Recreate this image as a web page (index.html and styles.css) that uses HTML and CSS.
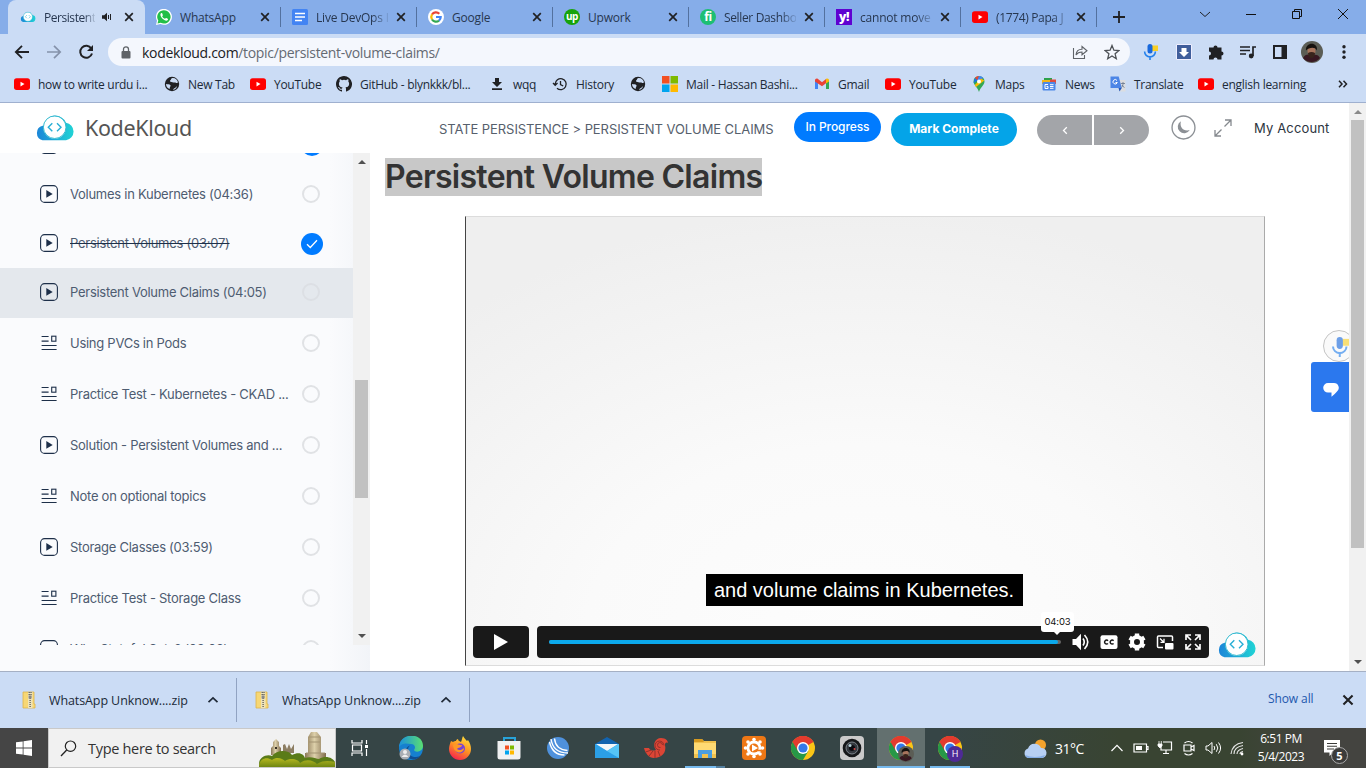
FILE: index.html
```html
<!DOCTYPE html>
<html lang="en">
<head>
<meta charset="utf-8">
<title>Persistent Volume Claims</title>
<link rel="stylesheet" href="styles.css">
</head>
<body>
<svg class="defs" width="0" height="0">
  <defs>
    <linearGradient id="cloudg" x1="0" x2="1"><stop offset="0" stop-color="#1c86d8"/><stop offset="1" stop-color="#20d3d5"/></linearGradient>
    <linearGradient id="ffg" x1=".8" y1="0" x2=".3" y2="1"><stop offset="0" stop-color="#ffe33e"/><stop offset=".5" stop-color="#ff9422"/><stop offset="1" stop-color="#f5214f"/></linearGradient>
    <linearGradient id="edgeg" x1="0" y1="0" x2="1" y2="0"><stop offset="0" stop-color="#1a8fdc"/><stop offset="1" stop-color="#5adf72"/></linearGradient>
    <linearGradient id="stone" x1="0" x2="1"><stop offset="0" stop-color="#8b7857"/><stop offset=".45" stop-color="#ddd0aa"/><stop offset="1" stop-color="#806c4d"/></linearGradient>
    <linearGradient id="bush" x1="0" y1="0" x2="0" y2="1"><stop offset="0" stop-color="#b7b91f"/><stop offset="1" stop-color="#6f8612"/></linearGradient>
    <symbol id="cloud" viewBox="0 0 40 26"><path d="M7.500 25.300A7.500 7.500 0 0 1 7.500 10.800H9A11.500 11.500 0 0 1 31 7.700 8.900 8.900 0 0 1 31 25.300z" fill="url(#cloudg)"/><circle cx="19.700" cy="12.500" r="11.300" fill="#fff"/><circle cx="19.700" cy="12.200" r="11.300" fill="none" stroke="#36bcd0" stroke-width="1"/><path d="M17.300 8.300 13.300 12.300l4 4M22 8.300l4 4-4 4" fill="none" stroke="#27aed5" stroke-width="1.400"/></symbol>
    <symbol id="x" viewBox="0 0 10 10"><path d="M1.200 1.200l7.600 7.600M8.800 1.200 1.200 8.800" fill="none" stroke="currentColor" stroke-width="1.700"/></symbol>
    <symbol id="yt" viewBox="0 0 16 16"><rect y="2.300" width="16" height="11.600" rx="2.600" fill="#f00"/><path d="M6.500 5.700v4.800l4-2.400z" fill="#fff"/></symbol>
    <symbol id="globe" viewBox="0 0 16 16"><circle cx="8" cy="8" r="7.200" fill="#202124"/><path d="M8.500 2c-2 .4-1 2-2.500 2.500C5.500 6 7 6 8.500 6.300c1.700.7 3-.3 3.500.8.800 0 1.600-.4 2-.9C13.300 3.500 11.300 1.800 8.500 2zM2 8c1.500.3 3.500 0 4.500 1.300.5 1.200-1 1.700-.8 3.700C3.500 12.300 2 10.500 2 8zM9 13.800c.5-1.400 1.500-1.800 2.600-2.400L13 10c-.5 2.500-2 3.700-4 3.800z" fill="#cbdcf5"/></symbol>
    <symbol id="play" viewBox="0 0 18 18"><rect x=".6" y=".6" width="16.800" height="16.800" rx="4" fill="none" stroke="#1d2f49" stroke-width="1.100"/><path d="M6.300 5v7.800l6.400-3.900z" fill="#1d2f49"/></symbol>
    <symbol id="doc" viewBox="0 0 18 18"><path d="M1.600 2.500h7M1.600 7.200h7M1.600 11.500h15M1.600 15.500h15" stroke="#1d2f49" stroke-width="1.200"/><rect x="11.700" y="2.200" width="4.200" height="5" fill="none" stroke="#1d2f49" stroke-width="1.100"/></symbol>
    <symbol id="zip" viewBox="0 0 14 18"><path d="M1 1h11v12h1v4H1z" fill="#f7d774" stroke="#ddb24a" stroke-width=".8"/><path d="M6 1h4.500v16H6z" fill="#eee3b8"/><path d="M7.200 1v4M9 1v4M8.100 7v10" stroke="#575757" stroke-width="1.300" stroke-dasharray="1 1"/><rect x="6.600" y="4.500" width="3" height="3" fill="#888"/></symbol>
    <symbol id="up" viewBox="0 0 12 12"><path d="M1.500 8.200 6 3.900l4.500 4.300" fill="none" stroke="currentColor" stroke-width="1.700"/></symbol>
    <symbol id="chrome" viewBox="0 0 24 24"><circle cx="12" cy="12" r="12" fill="#fbc516"/><path d="M12 12 1.600 6A12 12 0 0 1 22.400 6z" fill="#e33b2e"/><path d="M1.600 6A12 12 0 0 0 12 24l5.300-9L12 12z" fill="#279847"/><path d="M12 6h10.400A12 12 0 0 0 1.600 6L7 15z" fill="#e33b2e"/><circle cx="12" cy="12" r="6" fill="#fff"/><circle cx="12" cy="12" r="4.600" fill="#3478e8"/></symbol>
    <symbol id="face" viewBox="0 0 22 22"><circle cx="11" cy="11" r="11" fill="#5b5d55"/><path d="M2 17c2-4 5-4 9-3 4-1 7 0 8 3a11 11 0 0 1-17 0z" fill="#381822"/><ellipse cx="10.500" cy="10" rx="4" ry="5.500" fill="#a7745c"/><path d="M5 9.500c-1-8.500 12-9.500 11 0-2-4-8-3-11 0z" fill="#16120f"/><path d="M7 12q3.500-2 7 0 0 5-3.500 5T7 12z" fill="#38241c"/></symbol>
    <symbol id="mic" viewBox="0 0 16 16"><rect x="9" y="1.500" width="6" height="5.500" fill="#f8cf27"/><rect x="4.500" y="0" width="5" height="9.500" rx="2.500" fill="#1768dd"/><path d="M1.600 7.500a5.400 5.400 0 0 0 10.800 0M7 13v3" fill="none" stroke="#2481ec" stroke-width="1.600"/></symbol>
  </defs>
</svg>

<header class="tabs">
  <div class="tab tab-on"><svg class="i16"><use href="#cloud"/></svg><span class="tt fade short">Persistent</span><svg class="snd" viewBox="0 0 10 10"><path d="M0 3.300h2.200L5 .8v8.400L2.200 6.700H0z" fill="#202124"/><path d="M6.500 3v4M8.500 2v6" stroke="#202124"/></svg><svg class="cx"><use href="#x"/></svg></div>
  <div class="tab"><svg class="i16" viewBox="0 0 16 16"><path d="M0 16l1-4.200A8 8 0 1 1 4.400 15z" fill="#fff"/><path d="M1.500 14.600l.8-3A6.700 6.700 0 1 1 4.700 13.800z" fill="#22bf48"/><path d="M5.300 4c-1.700 1-.6 3.700 1 5.400 1.800 1.800 4.400 3.200 5.500 1.500.6-1 0-1.200-1.500-1.900-.8-.3-.8.7-1.400.7-1.200-.3-2.500-1.700-2.700-2.500.2-.5.8-.7.6-1.300C6.400 4.700 6.300 3.600 5.300 4z" fill="#fff"/></svg><span class="tt">WhatsApp</span><svg class="cx"><use href="#x"/></svg></div>
  <div class="tab"><svg class="i16" viewBox="0 0 16 16"><rect width="16" height="16" rx="1.500" fill="#4384f3"/><path d="M3 4.500h10M3 8h10M3 11.500h7" stroke="#fff" stroke-width="1.600"/></svg><span class="tt fade">Live DevOps I</span><svg class="cx"><use href="#x"/></svg></div>
  <div class="tab"><svg class="i16" viewBox="0 0 16 16"><circle cx="8" cy="8" r="8" fill="#fff"/><g fill="none" stroke-width="2.200"><path d="M4 5.500A4.700 4.700 0 0 1 11.300 4.700" stroke="#ea4335"/><path d="M4 10.500A5 5 0 0 1 4 5.400" stroke="#fbbc05"/><path d="M4 10.500A4.700 4.700 0 0 0 11 11.600" stroke="#34a853"/><path d="M8 8h4.700a4.700 4.700 0 0 1-1.700 3.600" stroke="#4285f4"/></g></svg><span class="tt">Google</span><svg class="cx"><use href="#x"/></svg></div>
  <div class="tab"><span class="fav upw">up</span><span class="tt">Upwork</span><svg class="cx"><use href="#x"/></svg></div>
  <div class="tab"><span class="fav fiv">fi</span><span class="tt fade tight">Seller Dashbo</span><svg class="cx"><use href="#x"/></svg></div>
  <div class="tab"><span class="fav yah">y!</span><span class="tt fade">cannot move</span><svg class="cx"><use href="#x"/></svg></div>
  <div class="tab"><svg class="i16"><use href="#yt"/></svg><span class="tt fade tight">(1774) Papa J</span><svg class="cx"><use href="#x"/></svg></div>
  <svg class="plus" viewBox="0 0 12 12"><path d="M6 0v12M0 6h12" stroke="#202124" stroke-width="1.800"/></svg>
  <div class="win">
    <svg viewBox="0 0 12 12"><path d="M1 4l5 4.500L11 4" fill="none" stroke="#202124"/></svg>
    <svg viewBox="0 0 12 12"><path d="M1 6.500h10" stroke="#111"/></svg>
    <svg viewBox="0 0 12 12"><path d="M1.500 3.500h7v7h-7zM3.500 3.500v-2h7v7h-2" fill="none" stroke="#111"/></svg>
    <svg viewBox="0 0 12 12"><path d="M1 1l10 10M11 1 1 11" stroke="#111"/></svg>
  </div>
</header>

<div class="toolbar">
  <svg class="nav" viewBox="0 0 16 16"><path d="M15 8H2M8 1.800 1.800 8 8 14.200" fill="none" stroke="#202124" stroke-width="1.800"/></svg>
  <svg class="nav" viewBox="0 0 16 16"><path d="M1 8h13M8 1.800 14.200 8 8 14.200" fill="none" stroke="#8592aa" stroke-width="1.700"/></svg>
  <svg class="nav" viewBox="0 0 16 16"><path d="M13.300 4.500A6 6 0 1 0 14 9.500" fill="none" stroke="#202124" stroke-width="2"/><path d="M15 1v6H9z" fill="#202124"/></svg>
  <div class="url">
    <svg class="lock" viewBox="0 0 10 13"><rect x=".5" y="5" width="9" height="7.500" rx="1" fill="#5f6368"/><path d="M2.500 5V3.300a2.500 2.500 0 0 1 5 0V5" fill="none" stroke="#5f6368" stroke-width="1.300"/></svg>
    <span class="addr"><b>kodekloud.com</b>/topic/persistent-volume-claims/</span>
    <svg class="i16" viewBox="0 0 16 16"><path d="M1.500 4v10.500h11V11M4 11c.3-4 2.800-5.700 6-5.700V2.500l5 4.300-5 4V8C7.500 8 5.500 8.700 4 11z" fill="none" stroke="#5f6368" stroke-width="1.100"/></svg>
    <svg class="i16 star" viewBox="0 0 16 16"><path d="M8 1.500l1.900 4.700 5 .4-3.800 3.200 1.200 4.900L8 12l-4.300 2.700 1.200-4.900L1.100 6.600l5-.4z" fill="none" stroke="#4d5156" stroke-width="1.300"/></svg>
  </div>
  <div class="ext">
    <svg viewBox="0 0 16 16"><use href="#mic"/></svg>
    <svg viewBox="0 0 16 16"><path d="M.5.500h15v15H.500z" fill="#405e9b" stroke="#eef"/><path d="M5.500 4h5v4H13l-5 5-5-5h2.500z" fill="#fff"/></svg>
    <svg viewBox="0 0 16 16"><path d="M1 3.500h4.500a2 2 0 1 1 4 0H13.500v4a2 2 0 1 1 0 4V15.500H9.500a2 2 0 0 0-4 0H1v-4a2 2 0 0 0 0-4z" fill="#202124"/></svg>
    <svg viewBox="0 0 16 16"><path d="M0 3h10M0 6.500h10M0 10h6M13 12V3h3" fill="none" stroke="#202124" stroke-width="1.700"/><circle cx="11.200" cy="12" r="2.400" fill="#202124"/></svg>
    <svg viewBox="0 0 16 16"><path d="M2 2h12v12H2z" fill="none" stroke="#202124" stroke-width="2"/><path d="M9.500 2H14v12H9.500z" fill="#202124"/></svg>
    <svg class="av"><use href="#face"/></svg>
    <svg viewBox="0 0 16 16"><g fill="#202124"><circle cx="8" cy="2.700" r="1.700"/><circle cx="8" cy="8" r="1.700"/><circle cx="8" cy="13.300" r="1.700"/></g></svg>
  </div>
</div>

<nav class="marks">
  <span><svg class="i16"><use href="#yt"/></svg><em class="m1">how to write urdu i...</em></span>
  <span><svg class="i16"><use href="#globe"/></svg><em>New Tab</em></span>
  <span><svg class="i16"><use href="#yt"/></svg><em>YouTube</em></span>
  <span><svg class="i16" viewBox="0 0 16 16"><path d="M8 0C3.580 0 0 3.580 0 8c0 3.540 2.290 6.530 5.470 7.590.4.070.55-.17.55-.38 0-.19-.01-.82-.01-1.490-2.010.37-2.530-.49-2.690-.94-.09-.23-.48-.94-.82-1.130-.28-.15-.68-.52-.01-.53.63-.01 1.080.58 1.230.82.72 1.210 1.870.87 2.330.66.070-.52.280-.87.510-1.070-1.780-.2-3.640-.89-3.640-3.950 0-.87.310-1.590.82-2.150-.08-.2-.36-1.020.08-2.120 0 0 .67-.21 2.200.82a7.600 7.600 0 0 1 4 0c1.530-1.040 2.200-.82 2.200-.82.440 1.100.16 1.920.08 2.120.51.56.82 1.270.82 2.150 0 3.070-1.870 3.750-3.650 3.950.29.25.54.73.54 1.480 0 1.070-.01 1.930-.01 2.200 0 .21.150.46.55.38A8 8 0 0 0 8 0z" fill="#202124"/></svg><em>GitHub - blynkkk/bl...</em></span>
  <span><svg class="i16" viewBox="0 0 16 16"><path d="M6 2h4v4h3l-5 5-5-5h3zM3 12.300h10V14H3z" fill="#202124"/></svg><em>wqq</em></span>
  <span><svg class="i16" viewBox="0 0 16 16"><path d="M3.200 8A5.500 5.500 0 1 1 5 12.200M8.500 5v3.500l2.700 1.500M1 7l2.200 2.300L5.500 7" fill="none" stroke="#202124" stroke-width="1.300"/></svg><em>History</em></span>
  <span><svg class="i16"><use href="#globe"/></svg></span>
  <span><svg class="i16" viewBox="0 0 16 16"><path d="M0 0h7.500v7.500H0z" fill="#f25022"/><path d="M8.500 0H16v7.500H8.500z" fill="#7fba00"/><path d="M0 8.500h7.500V16H0z" fill="#00a4ef"/><path d="M8.500 8.500H16V16H8.500z" fill="#ffb900"/></svg><em>Mail - Hassan Bashi...</em></span>
  <span><svg class="i16" viewBox="0 0 16 16"><path d="M1 3.500V13h3V7z" fill="#4285f4"/><path d="M15 3.500V13h-3V7z" fill="#34a853"/><path d="M1 4.500C1 3 2.500 2 4 3l4 3.200L12 3v4.200L8 10.200 1 5.500z" fill="#ea4335"/><path d="M12 3c1.500-1 3 0 3 1.500v1L12 7.500z" fill="#fbbc04"/></svg><em>Gmail</em></span>
  <span><svg class="i16"><use href="#yt"/></svg><em>YouTube</em></span>
  <span><svg class="i16" viewBox="0 0 16 16"><path d="M8 0a5.500 5.500 0 0 1 5.500 5.500C13.500 9 9.500 11 8 16 6.500 11 2.500 9 2.500 5.500A5.500 5.500 0 0 1 8 0z" fill="#34a853"/><path d="M8 0a5.500 5.500 0 0 0-4.200 2L6.500 4.500z" fill="#ea4335"/><path d="M8 0l-2 5 4-1 2.200-2.200A5.500 5.500 0 0 0 8 0z" fill="#4285f4"/><path d="M3.800 9 10 2.500l3.300 2L5 11z" fill="#fbbc04"/><path d="M3.800 2 2.600 7l4-2.500z" fill="#1a73e8"/><circle cx="8" cy="5.500" r="2" fill="#fff"/></svg><em>Maps</em></span>
  <span><svg class="i16" viewBox="0 0 16 16"><path d="M3 2h8v4H3z" fill="#2da14a"/><path d="M1 4h9v4H1z" fill="#f2b51b"/><path d="M9 3.500h6V8H9z" fill="#df4b3e"/><rect x="1.500" y="6" width="13" height="8.500" rx="1" fill="#4d87e8"/><path d="M7 8.500H4v4h3v-2H5.500M9 8.700h3.500M9 10.500h3.500M9 12.300h3.500" fill="none" stroke="#fff"/></svg><em>News</em></span>
  <span><svg class="i16" viewBox="0 0 16 16"><path d="M6 4h9.500v11.500H9z" fill="#dcdde0"/><path d="M.5.500h8.200L11.800 12H.5z" fill="#4c85e6"/><path d="M8.500 12h3.300L9.500 15.500z" fill="#2459be"/><path d="M7 4.500a2.200 2.200 0 1 0 .3 2H5.500" fill="none" stroke="#fff"/><path d="M10.800 7.500H15M13 6v1.500c0 2-.5 3-1.500 4M12 9c.5 1.200 1.500 2 2.500 2.500" fill="none" stroke="#66758b" stroke-width=".8"/></svg><em>Translate</em></span>
  <span><svg class="i16"><use href="#yt"/></svg><em>english learning</em></span>
  <span><svg viewBox="0 0 10 8" width="10" height="8"><path d="M1 .8 4 4 1 7.200M5.500.8 8.500 4l-3 3.200" fill="none" stroke="#202124" stroke-width="1.500"/></svg></span>
</nav>

<main class="page">
  <div class="site">
    <div class="top">
      <svg class="logo"><use href="#cloud"/></svg>
      <span class="brand">KodeKloud</span>
      <span class="crumb">STATE PERSISTENCE &gt; PERSISTENT VOLUME CLAIMS</span>
      <span class="prog">In Progress</span>
      <span class="mark">Mark Complete</span>
      <span class="pn"><i><svg viewBox="0 0 6 8"><path d="M4.800.8 1.500 4l3.300 3.200" fill="none" stroke="#fff" stroke-width="1.300"/></svg></i><i><svg viewBox="0 0 6 8"><path d="M1.200.8 4.500 4 1.200 7.200" fill="none" stroke="#fff" stroke-width="1.300"/></svg></i></span>
      <svg class="moon" viewBox="0 0 24 24"><circle cx="12" cy="12" r="11" fill="none" stroke="#8c9095" stroke-width="1.300"/><path d="M9.500 6C8 12 12 16 18 14.500A6.200 6.200 0 1 1 9.500 6z" fill="#8c9095"/></svg>
      <svg class="grow" viewBox="0 0 18 18"><path d="M11 1h6v6M17 1l-6.500 6.500M7 17H1v-6M1 17l6.500-6.500" fill="none" stroke="#85898e" stroke-width="1.300"/></svg>
      <span class="acct">My Account</span>
    </div>
    <div class="body">
      <aside class="side">
        <div class="scroll">
          <div class="list">
            <div class="row cut"><svg><use href="#play"/></svg><span></span><i class="done"></i></div>
            <div class="row r50 first"><svg><use href="#play"/></svg><span>Volumes in Kubernetes (04:36)</span><i></i></div>
            <div class="row r49"><svg><use href="#play"/></svg><span class="strike">Persistent Volumes (03:07)</span><i class="done"><svg viewBox="0 0 12 10"><path d="M1 5.200 4.300 8.500 11 1.300" fill="none" stroke="#fff" stroke-width="1.300"/></svg></i></div>
            <div class="row r50 on"><svg><use href="#play"/></svg><span>Persistent Volume Claims (04:05)</span><i></i></div>
            <div class="row"><svg><use href="#doc"/></svg><span>Using PVCs in Pods</span><i></i></div>
            <div class="row"><svg><use href="#doc"/></svg><span>Practice Test - Kubernetes - CKAD ...</span><i></i></div>
            <div class="row"><svg><use href="#play"/></svg><span>Solution - Persistent Volumes and ...</span><i></i></div>
            <div class="row"><svg><use href="#doc"/></svg><span>Note on optional topics</span><i></i></div>
            <div class="row"><svg><use href="#play"/></svg><span>Storage Classes (03:59)</span><i></i></div>
            <div class="row"><svg><use href="#doc"/></svg><span>Practice Test - Storage Class</span><i></i></div>
            <div class="row"><svg><use href="#play"/></svg><span>Why Stateful Sets? (03:02)</span><i></i></div>
          </div>
          <div class="bar bar-side"><svg class="arr" viewBox="0 0 8 4"><path d="M0 4 4 0l4 4z" fill="#505050"/></svg><b></b><svg class="arr" viewBox="0 0 8 4"><path d="M0 0h8L4 4z" fill="#505050"/></svg></div>
        </div>
      </aside>
      <section class="lesson">
        <h1><span>Persistent Volume Claims</span></h1>
        <div class="video">
          <div class="cap">and volume claims in Kubernetes.</div>
          <div class="ctl">
            <div class="pbtn"><svg viewBox="0 0 14 16"><path d="M0 0v16l14-8z" fill="#fff"/></svg></div>
            <div class="pbar">
              <div class="track"><div class="fill"></div><span class="tip">04:03</span></div>
              <svg viewBox="0 0 20 20"><path d="M1.500 7H5l5-5.300v16.600L5 13H1.500z" fill="#fff"/><path d="M12 6.500q2.500 3.500 0 7M13.500 3q6.500 7 0 14" fill="none" stroke="#fff" stroke-width="1.600"/></svg>
              <svg viewBox="0 0 20 20"><rect x="1.500" y="3.300" width="17" height="13.600" rx="2" fill="#fff"/><path d="M9 8.700A2 2 0 1 0 9 11.500M14.600 8.700a2 2 0 1 0 0 2.800" fill="none" stroke="#1a1a1a" stroke-width="1.500"/></svg>
              <svg viewBox="0 0 20 20"><circle cx="10" cy="10" r="5" fill="none" stroke="#fff" stroke-width="4"/><path d="M10 1.500v3M10 15.500v3M2.600 5.700l2.600 1.500M14.800 12.800l2.600 1.500M17.400 5.700l-2.600 1.500M5.200 12.800l-2.600 1.500" stroke="#fff" stroke-width="4.400"/></svg>
              <svg viewBox="0 0 20 20"><path d="M8 15.500H3.500a1 1 0 0 1-1-1V5a1 1 0 0 1 1-1h13a1 1 0 0 1 1 1v4" fill="none" stroke="#fff" stroke-width="1.500"/><rect x="10" y="11" width="8.500" height="6.500" rx="1" fill="#fff"/><path d="M5 6.500l3.500 3.500M9 6.800v3.500H5.500" fill="none" stroke="#fff" stroke-width="1.300"/></svg>
              <svg viewBox="0 0 20 20"><path d="M3 8V3h5M12 3h5v5M17 12v5h-5M8 17H3v-5M3 3l5 5M17 3l-5 5M17 17l-5-5M3 17l5-5" fill="none" stroke="#fff" stroke-width="1.700"/></svg>
            </div>
            <svg class="logo"><use href="#cloud"/></svg>
          </div>
        </div>
      </section>
    </div>
    <div class="dictate"><svg viewBox="0 0 16 16"><use href="#mic"/></svg></div>
    <div class="chat"><svg viewBox="0 0 16 14"><path d="M5 0h6a4.800 4.800 0 0 1 3 8.500Q12 11 8.500 13.800V9.600H5A4.800 4.800 0 0 1 5 0z" fill="#fff"/></svg></div>
  </div>
  <div class="bar bar-main"><svg class="arr" viewBox="0 0 8 4"><path d="M0 4 4 0l4 4z" fill="#8a8a8a"/></svg><b></b><svg class="arr" viewBox="0 0 8 4"><path d="M0 0h8L4 4z" fill="#505050"/></svg></div>
</main>

<div class="dl">
  <div class="file"><svg class="z"><use href="#zip"/></svg><span>WhatsApp Unknow....zip</span><svg class="u"><use href="#up"/></svg></div>
  <div class="file"><svg class="z"><use href="#zip"/></svg><span>WhatsApp Unknow....zip</span><svg class="u"><use href="#up"/></svg></div>
  <span class="all">Show all</span>
  <svg class="cx"><use href="#x"/></svg>
</div>

<footer class="task">
  <div class="start"><svg viewBox="0 0 16 16"><path d="M0 2.300l6.700-.9v6.200H0zM7.500 1.300 16 0v7.600H7.500zM0 8.400h6.700v6.200L0 13.700zM7.500 8.400H16V16l-8.500-1.200z" fill="#fff"/></svg></div>
  <div class="find">
    <svg class="mag" viewBox="0 0 17 17"><circle cx="10.500" cy="6.200" r="5.200" fill="none" stroke="#222" stroke-width="1.200"/><path d="M6.700 10 1 16" stroke="#222" stroke-width="1.300"/></svg>
    <span>Type here to search</span>
    <svg class="ruins" viewBox="0 0 77 38"><path d="M13 26v-7l2-2v-4l3-3 3 3v4l2 2v7z" fill="url(#stone)"/><path d="M17 18h2v2h-2z" fill="#372f24"/><path d="M25 24v-8l2-1 2 5 2-5 2 5 3-5v9z" fill="#8d7e63"/><path d="M47 30v-6h3V8l3-5h6l4 5v16h5v6z" fill="url(#stone)"/><path d="M51 8h11M51 13h11M48 24h19" stroke="#a39472"/><path d="M2 38C-2 30 8 24 14 27c5-7 17-6 20-1 8-4 12 0 13 3 6-2 11 1 14 1 7-4 14-1 16 3v5z" fill="#5a7b18"/><path d="M1 38c0-8 7-11 13-7 5-4 11-1 13 1 6-4 14-1 15 2 7-5 14-2 17 1 7-4 12-3 18-2v5z" fill="url(#bush)"/></svg>
  </div>
  <div class="apps">
    <div><svg class="s18" viewBox="0 0 18 18"><path d="M1 1v3h10V1M1 17v-3h10v3M1.500 6h9v6h-9zM15.500 1v4M15.500 10v7" fill="none" stroke="#fff" stroke-width="1.200"/><path d="M14 6h3v3h-3z" fill="#fff"/></svg></div>
    <div><svg viewBox="0 0 24 24"><circle cx="12" cy="12" r="12" fill="#1680cf"/><path d="M0 11C1-4 24-4 24 10c0 6-8 7-9 4 2-2 1-6-3-6S4 6 0 11z" fill="url(#edgeg)"/><path d="M12 9c-5 2-4 12 5 12 2 0 4-1 5-2-3 6-13 6-15-1-1-5 1-8 5-9z" fill="#104e93"/><circle cx="6" cy="18" r="5.500" fill="#a9aeb4"/><circle cx="6" cy="16" r="2" fill="#eee"/><path d="M2.500 21q3.500-5 7 0z" fill="#eee"/></svg></div>
    <div><svg viewBox="0 0 24 24"><path d="M3 5l2 1c1-1 2-1 3-1 0-1 1-2 2-2 0 2 2 2 3 3 1-2 1-4 2-6 2 3 3 4 4 5l1-1c2 3 3 6 3 9a11 11 0 0 1-22 0c0-3 1-5 2-8z" fill="url(#ffg)"/><circle cx="12" cy="12.500" r="5" fill="#7542d7"/><path d="M5 9c3-3 6 1 9 0 0 3-4 2-5 4 2 2 5 1 7-1 0 6-10 7-11-3z" fill="#ff9826"/></svg></div>
    <div><svg viewBox="0 0 24 24"><path d="M7 6V2h11v4" fill="none" stroke="#28a3d9" stroke-width="2"/><path d="M.5 5h23v16a2.500 2.500 0 0 1-2.500 2.500H3A2.500 2.500 0 0 1 .5 21z" fill="#f0f1f2"/><path d="M8 9.500h4v4H8z" fill="#f25022"/><path d="M13 9.500h4v4h-4z" fill="#7fba00"/><path d="M8 14.500h4v4H8z" fill="#00a4ef"/><path d="M13 14.500h4v4h-4z" fill="#ffb900"/></svg></div>
    <div><svg viewBox="0 0 24 24"><circle cx="12" cy="12" r="11" fill="#4f91dc"/><path d="M5 3q2 14 17 14M8.500 2.500q1 11 13 12M3.500 6q3 13 15 13" fill="none" stroke="#fff" stroke-width="1.400"/></svg></div>
    <div><svg viewBox="0 0 24 24"><path d="M0 8l12-7 12 7v4H0z" fill="#1263af"/><path d="M0 8h24v14H0z" fill="#38aaf0"/><path d="M1 8h22l-11 7z" fill="#f3f6f8"/><path d="M0 8l24 14H0z" fill="#2b9fe6"/><path d="M12 15l12-7v14z" fill="#55c4f6"/></svg></div>
    <div><svg viewBox="0 0 24 24"><path d="M0 12l5 0c1 3 5 3 7 2C8 9 11 2 17 2c5 0 7 3 7 5-2-1-3 0-3 2 2 8-4 13-11 13C5 22 1 17 0 12z" fill="#dc4535"/><path d="M20 9.500a4.500 4.500 0 1 0-4 4.500M18.500 9a2.500 2.500 0 1 0-2 2.500M1.500 16l6-2M5 20l4-5M11 22v-7M16 20l-2-5" fill="none" stroke="#93302a" stroke-width="1"/></svg></div>
    <div class="two"><svg viewBox="0 0 24 24"><path d="M1 3h8l2 2h12v17H1z" fill="#f1c14d"/><path d="M1 3h8l2 3H1z" fill="#d79a20"/><path d="M1 7h22v11H1z" fill="#ffda73"/><path d="M5 22v-8h14v8h-4v-4H9v4z" fill="#4b9ee0"/></svg></div>
    <div><svg viewBox="0 0 24 24"><rect width="24" height="24" rx="4" fill="#ee7715"/><g fill="#fff"><circle cx="12" cy="3.500" r="1.800"/><circle cx="12" cy="20.500" r="1.800"/><circle cx="3.500" cy="12" r="1.800"/><circle cx="20.500" cy="12" r="1.800"/><circle cx="6" cy="6" r="1.800"/><circle cx="18" cy="6" r="1.800"/><circle cx="6" cy="18" r="1.800"/><circle cx="18" cy="18" r="1.800"/><circle cx="12" cy="12" r="7.500"/></g><circle cx="12" cy="12" r="4.600" fill="#ee7715"/><path d="M10 8.500v7l6-3.500z" fill="#fff"/><path d="M14 14.500h5" stroke="#ee7715" stroke-width="1.600"/></svg></div>
    <div><svg><use href="#chrome"/></svg></div>
    <div><svg viewBox="0 0 24 24"><rect width="24" height="24" rx="4" fill="#cacaca"/><circle cx="12" cy="12" r="9.300" fill="#151719"/><circle cx="12" cy="12" r="6" fill="#34393f" stroke="#7c838b"/><circle cx="12" cy="12" r="3" fill="#0a0a10"/><circle cx="10" cy="9.500" r="1.500" fill="#b5d0d8"/><circle cx="14.500" cy="13" r="1" fill="#d64444"/></svg></div>
    <div class="live"><svg viewBox="0 0 24 24"><use href="#chrome"/></svg><svg class="mini"><use href="#face"/></svg></div>
    <div class="open"><svg viewBox="0 0 24 24"><use href="#chrome"/></svg><span class="h">H</span></div>
  </div>
  <div class="tray">
    <svg class="wea" viewBox="0 0 24 20"><circle cx="17.500" cy="6" r="5.500" fill="#f4a32c"/><path d="M5 19a5 5 0 0 1 0-9.500A7 7 0 0 1 18 9a5 5 0 0 1 1 10z" fill="#b7d0f3"/><path d="M2 16q10 4 20 0-1 3-3 3H5q-2 0-3-3z" fill="#86aee6"/></svg>
    <span class="deg">31°C</span>
    <svg viewBox="0 0 16 16"><path d="M2.500 11 8 5.300l5.500 5.700" fill="none" stroke="#fff" stroke-width="1.200"/></svg>
    <svg viewBox="0 0 16 16"><path d="M1 4h12.500v8H1zM13.500 6.500H15v3h-1.500" fill="none" stroke="#fff" stroke-width="1.200"/><path d="M3 6h6v4H3z" fill="#fff"/></svg>
    <svg viewBox="0 0 16 16"><path d="M6 2h8.500v8H4V7M9 10v3M6 13.500h6" fill="none" stroke="#fff" stroke-width="1.200"/><path d="M1 4h4v2L3 8 1 6zM2 1v3M4.300 1v3" fill="#fff" stroke="#fff" stroke-width=".8"/></svg>
    <svg viewBox="0 0 16 16"><path d="M3 5h7v6H3zM10 7l3-1.500v5L10 9M3.500 3q4-3 8 0M3.500 13.500q4 3 8 0" fill="none" stroke="#fff" stroke-width="1.200"/></svg>
    <svg viewBox="0 0 16 16"><path d="M1 6h2l4-3.500v11L3 10H1zM9 6q1.500 2 0 4M11.300 4.200q3 3.800 0 7.600M13.500 2.500q4.200 5.500 0 11" fill="none" stroke="#fff"/></svg>
    <svg viewBox="0 0 16 16"><path d="M2 14Q3 4 14 2.500M5 14q0-7 9-8.500M8 14q0-4 6-5.500M11 14q0-2 3-2.500" fill="none" stroke="#e6e6e6" stroke-width="1.100"/><circle cx="13" cy="14" r="1.400" fill="#fff"/></svg>
    <div class="clock"><span>6:51 PM</span><span>5/4/2023</span></div>
    <div class="note"><svg viewBox="0 0 16 16"><path d="M0 0h16v12.500H9L5.500 16v-3.500H0z" fill="#fff"/><path d="M3 3.500h10M3 6.300h10M3 9h7" stroke="#3c3c3a" stroke-width="1.100"/></svg><b>5</b></div>
  </div>
</footer>
</body>
</html>
```
FILE: styles.css
```css
* { box-sizing: border-box; }
html, body { margin: 0; }
body { width: 1366px; height: 768px; overflow: hidden; display: flex; flex-direction: column; font-family: "Open Sans", sans-serif; font-size: 12px; color: #202a38; background: #fff; }
svg { display: block; flex: none; }
.defs { position: absolute; }
.i16 { width: 16px; height: 16px; }
em, i { font-style: normal; }

/* tab strip */
.tabs { height: 34px; flex: none; display: flex; background: #86ade9; padding-left: 8px; }
.tab { width: 136px; height: 34px; display: flex; align-items: center; padding: 0 12px; gap: 8px; position: relative; }
.tab:not(.tab-on)::after { content: ""; position: absolute; right: -1px; top: 7px; width: 1px; height: 20px; background: #53719f; }
.tab-on { width: 137px; background: #cbdcf5; border-radius: 8px 8px 0 0; margin-right: -1px; }
.tt { flex: 1; min-width: 0; white-space: nowrap; letter-spacing: -.2px; color: #273750; }
.fade { mask-image: linear-gradient(90deg, #000 78%, rgba(0,0,0,.15)); }
.tight { letter-spacing: -.35px; }
.short { flex: 0 0 51px; margin-right: -1px; letter-spacing: -.45px; }
.snd { width: 10px; height: 10px; margin-right: 2px; }
.cx { width: 10px; height: 10px; color: #202124; }
.tab .cx { margin-right: -2px; }
.tab-on .cx { margin-left: 2px; }
.fav { width: 16px; height: 16px; border-radius: 8px; color: #fff; font: bold 10px/15px "Open Sans", sans-serif; text-align: center; letter-spacing: -.5px; }
.upw { background: #17a30b; }
.fiv { background: #1dbf73; font-size: 12px; }
.yah { background: #5f01d1; border-radius: 0; font-size: 12px; font-weight: 800; }
.plus { width: 12px; height: 12px; margin: 11px 0 0 17px; }
.win { display: flex; gap: 34px; margin: 8px 0 0 74px; }
.win svg { width: 12px; height: 12px; }

/* toolbar */
.toolbar { height: 35px; flex: none; background: #cbdcf5; display: flex; align-items: center; padding: 1px 0 0 14px; }
.nav { width: 16px; height: 16px; margin-right: 16px; }
.url { width: 1022px; height: 28px; margin-left: -2px; border-radius: 14px; background: #f4f7fd; display: flex; align-items: center; padding: 0 10px 0 13px; }
.lock { width: 10px; height: 13px; margin-right: 11px; }
.addr { flex: 1; font-size: 14px; letter-spacing: -.32px; color: #646a73; }
.addr b { font-weight: 400; color: #202124; }
.star { margin-left: 16px; }
.ext { display: flex; align-items: center; gap: 16px; margin-left: 13px; }
.ext svg { width: 16px; height: 16px; }
.ext svg:first-child { margin-right: 1px; }
.ext .av { width: 22px; height: 22px; margin: 0 -3px 0 -3px; }

/* bookmarks */
.marks { height: 34px; flex: none; background: #cbdcf5; border-bottom: 1px solid #9fb0cf; display: grid; padding: 0 0 3px 14px; align-items: center; grid-template-columns: 150px 86px 86px 153px 63px 78px 32px 152px 71px 86px 70px 69px 88px 140px 12px; }
.marks span { display: flex; align-items: center; gap: 8px; white-space: nowrap; }
.marks em { letter-spacing: -.28px; }

/* site */
.page { height: 568px; flex: none; display: flex; }
.site { width: 1349px; position: relative; overflow: hidden; font-family: Inter, sans-serif; }
.top { height: 50px; display: flex; padding-left: 35px; color: #56606c; white-space: nowrap; }
.logo { width: 40px; height: 26px; }
.top .logo { margin-top: 12px; }
.brand { width: 107px; margin: 9px 247px 0 10px; font: 21.500px/32px "Noto Sans", sans-serif; letter-spacing: -.35px; color: #555; }
.crumb { width: 335px; margin-top: 16px; font-size: 13px; line-height: 20px; letter-spacing: -.08px; }
.prog { width: 87px; height: 30px; margin: 9px 10px 0 20px; border-radius: 15px; background: #007bff; color: #fff; font-size: 12px; font-weight: 500; line-height: 30px; letter-spacing: -.1px; text-align: center; }
.mark { width: 126px; height: 33px; margin: 10px 20px 0 0; border-radius: 17px; background: #04a4e8; color: #fff; font-size: 12px; font-weight: 700; line-height: 32px; text-align: center; }
.pn { width: 112px; height: 30px; margin: 12px 22px 0 0; display: flex; gap: 2px; }
.pn i { flex: 1; background: #a3a5a9; display: flex; align-items: center; justify-content: center; }
.pn i:first-child { border-radius: 15px 0 0 15px; }
.pn i:last-child { border-radius: 0 15px 15px 0; }
.pn svg { width: 6px; height: 9px; }
.moon { width: 25px; height: 25px; margin: 12px 18px 0 0; }
.grow { width: 18px; height: 18px; margin: 16px 22px 0 0; }
.acct { margin-top: 15px; font-size: 13px; line-height: 20px; letter-spacing: .15px; color: #2c3440; }
.body { height: 518px; display: flex; }
.side { width: 370px; background: linear-gradient(90deg, #fafbfd 330px, #f2f4f8); }
.scroll { height: 492px; display: flex; overflow: hidden; }
.list { width: 353px; margin-top: -33px; }
.row { height: 51px; display: flex; align-items: center; padding: 0 32px 2px 40px; color: #4e5c71; font-size: 13px; white-space: nowrap; }
.row.cut, .r49 { height: 49px; }
.r50 { height: 50px; }
.row.first, .row.cut { padding-bottom: 0; }
.row > svg { width: 18px; height: 18px; margin-right: 12px; }
.row span { flex: 1; letter-spacing: -.27px; }
.row i { width: 18px; height: 18px; border: 2px solid #e0e2e5; border-radius: 50%; margin-right: 1px; }
.on { background: #e4e8ed; }
.on i { border-color: #dcdfe4; }
.row i.done { width: 22px; height: 22px; background: #007bff; border: 0; margin-right: -2px; display: flex; align-items: center; justify-content: center; }
.r49 i.done { margin-top: 2px; }
.done svg { width: 12px; height: 10px; }
.strike { text-decoration: line-through; text-decoration-color: #1d2f49; }
.row span.strike { letter-spacing: -.25px; }
.strike { flex: none; }
.row .strike { flex: 0 0 auto; margin-right: auto; }
.bar { width: 17px; background: #f1f1f1; display: flex; flex-direction: column; align-items: center; }
.bar b { width: 13px; background: #c1c1c1; }
.arr { width: 8px; height: 4px; }
.bar-side { padding-top: 7px; }
.bar-side b { height: 118px; margin: 216px 0 136px; }
.bar-main { padding-top: 7px; }
.bar-main b { height: 428px; margin: 6px 0 112px; }
.lesson { width: 979px; padding: 5px 0 0 15px; }
h1 { margin: 0; height: 58px; font-size: 32px; line-height: 38px; font-weight: 600; letter-spacing: -.7px; color: #333; white-space: nowrap; }
h1 span { display: inline-block; height: 38px; background: #c8c8c8; }
.video { width: 800px; height: 450px; margin-left: 80px; border: 1px solid #dcdcdc; border-left-color: #444; border-right-color: #aaa; background: radial-gradient(ellipse 620px 430px at 50% 94%, #fdfdfd 0, #fafafa 45%, #efefef 100%); display: flex; flex-direction: column; justify-content: flex-end; align-items: center; padding-bottom: 7px; }
.cap { width: 317px; height: 32px; background: #000; color: #fff; font: 20px/32px "Liberation Sans", sans-serif; text-align: center; white-space: nowrap; margin: 0 2px 20px 0; }
.ctl { width: 784px; height: 32px; display: flex; }
.pbtn { width: 56px; margin-right: 8px; border-radius: 4px; background: #191919; display: flex; align-items: center; justify-content: center; }
.pbtn svg { width: 14px; height: 16px; }
.pbar { width: 672px; margin-right: 8px; border-radius: 4px; background: #191919; display: flex; align-items: center; gap: 8px; padding-left: 12px; }
.pbar > svg { width: 20px; height: 20px; }
.track { width: 512px; height: 4px; margin-right: 2px; border-radius: 2px; background: #666; position: relative; }
.fill { width: 509px; height: 4px; border-radius: 2px; background: #0ba9ec; }
.tip { position: absolute; right: -13px; top: -28px; width: 33px; height: 20px; border-radius: 3px; background: #fff; color: #111; font-size: 9.500px; line-height: 20px; letter-spacing: -.1px; text-align: center; }
.tip::after { content: ""; position: absolute; left: 12px; top: 19px; border: 4px solid transparent; border-top-color: #fff; border-bottom: 0; }
.ctl .logo { margin-top: 6px; }
.dictate { position: absolute; left: 1323px; top: 227px; width: 32px; height: 32px; border: 1px solid #c4c4c4; border-radius: 50%; background: #fafafa; padding: 6px 7px; }
.dictate svg { width: 20px; height: 20px; opacity: .62; }
.chat { position: absolute; right: 0; top: 259px; width: 38px; height: 50px; border-radius: 3px 0 0 3px; background: #2b78ee; padding: 21px 0 0 12px; }
.chat svg { width: 16px; height: 14px; }

/* downloads */
.dl { height: 57px; flex: none; background: #cbdcf5; border-top: 1px solid #a5b0c4; display: flex; align-items: center; white-space: nowrap; }
.file { width: 233px; height: 44px; border-right: 1px solid #91a3c2; display: flex; align-items: center; padding-left: 18px; }
.file:first-child { width: 237px; padding-left: 22px; }
.z { width: 14px; height: 18px; margin: 0 13px 0 0; }
.file span { width: 158px; letter-spacing: -.1px; font-size: 12.500px; }
.u { width: 12px; height: 12px; }
.all { margin-left: 798px; width: 74px; font-size: 12px; letter-spacing: -.1px; color: #2257ad; margin-top: -3px; }
.dl .cx { width: 12px; height: 12px; margin-top: -1px; }

/* taskbar */
.task { height: 40px; flex: none; display: flex; background: linear-gradient(90deg, #364546 0 940px, #394432 1120px 1240px, #444440 1310px); color: #fff; }
.start { width: 48px; background: #454545; padding: 12px 16px; }
.start svg { width: 16px; height: 16px; }
.find { width: 288px; background: #f1f1f1; border: 1px solid #c9c9c9; display: flex; align-items: center; color: #333; padding-left: 11px; }
.mag { width: 17px; height: 17px; }
.find span { width: 172px; margin-left: 11px; font-size: 14.500px; letter-spacing: -.3px; white-space: nowrap; }
.ruins { width: 77px; height: 38px; margin-left: -1px; }
.apps { width: 638px; height: 40px; display: grid; grid-template-columns: 50px repeat(12, 49px); }
.apps div { display: flex; align-items: center; justify-content: center; position: relative; }
.apps svg { width: 24px; height: 24px; }
.apps .s18 { width: 18px; height: 18px; margin-right: 2px; }
.apps .live { background: #63706f; box-shadow: inset 0 -2px #76b9ed; margin-left: 1px; }
.apps .mini { position: absolute; left: 21px; top: 18px; width: 16px; height: 16px; }
.two::after, .open::after { content: ""; position: absolute; bottom: 0; left: 5px; width: 40px; height: 2px; background: linear-gradient(90deg, #76b9ed 31px, #547f9e 31px); }
.open::after { background: #76b9ed; }
.h { position: absolute; left: 22px; top: 18px; width: 16px; height: 16px; border-radius: 8px; background: #4e2a96; font-size: 9px; line-height: 16px; text-align: center; }
.tray { display: flex; align-items: center; width: 392px; padding-left: 50px; }
.tray > svg { width: 16px; height: 16px; margin-right: 8px; }
.tray .wea { width: 24px; height: 20px; margin: 2px 8px 0 -1px; }
.deg { width: 54px; font-size: 14px; letter-spacing: -.5px; }
.clock { width: 56px; margin-left: 0; display: flex; flex-direction: column; align-items: center; font-size: 12px; line-height: 18px; letter-spacing: -.45px; white-space: nowrap; }
.note { width: 30px; height: 40px; margin-left: 15px; position: relative; padding-top: 12px; }
.note svg { width: 16px; height: 16px; }
.note b { position: absolute; left: 7px; top: 19px; width: 17px; height: 17px; border: 1px solid #aaa; border-radius: 50%; background: #3c3c3b; font-size: 11px; line-height: 15px; text-align: center; }
```
